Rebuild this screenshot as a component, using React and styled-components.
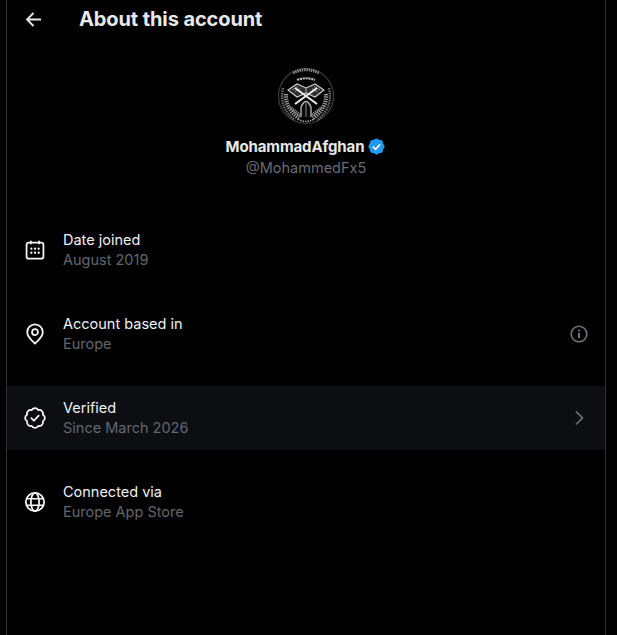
import React from "react";
import styled, { createGlobalStyle } from "styled-components";

const GlobalStyle = createGlobalStyle`
  html, body {
    margin: 0;
    height: 100%;
    background: #000;
  }
  body {
    font-family: Inter, "Liberation Sans", sans-serif;
    overflow: hidden;
  }
`;

const Panel = styled.main`
  box-sizing: border-box;
  width: 600px;
  height: 635px;
  margin-left: 6px;
  border-left: 1px solid #2f3336;
  border-right: 1px solid #2f3336;
  color: #e7e9ea;
`;

const Header = styled.header`
  display: flex;
  align-items: center;
  height: 38px;
  padding-left: 18px;
  gap: 37px;
`;

const BackIcon = styled.svg`
  width: 17px;
  height: 17px;
  fill: none;
  stroke: #e7e9ea;
  stroke-width: 1.8;
`;

const Title = styled.h1`
  margin: 0;
  font-size: 20px;
  line-height: 24px;
  font-weight: 700;
  letter-spacing: -0.1px;
`;

const Profile = styled.section`
  display: flex;
  flex-direction: column;
  align-items: center;
  padding-top: 28px;
`;

const Avatar = styled.svg`
  width: 60px;
  height: 60px;
  display: block;
`;

const NameRow = styled.div`
  display: flex;
  align-items: center;
  gap: 3px;
  margin-top: 10px;
  height: 20px;
  font-size: 15px;
  font-weight: 700;
  letter-spacing: -0.1px;
`;

const Handle = styled.div`
  margin-top: 2px;
  font-size: 14.5px;
  line-height: 20px;
  color: #676c71;
`;

const List = styled.ul`
  list-style: none;
  margin: 0;
  padding: 40px 0 0;
  display: flex;
  flex-direction: column;
  gap: 20px;
`;

const Row = styled.li`
  display: flex;
  align-items: center;
  height: 64px;
  padding: 0 17px;
  background: ${(p) => (p.$active ? "#0c0e11" : "transparent")};
`;

const RowIcon = styled.svg`
  width: 22px;
  height: 22px;
  flex: none;
  fill: none;
  stroke: #f7f8f8;
  stroke-width: 1.9;
  stroke-linecap: round;
  stroke-linejoin: round;
`;

const RowText = styled.div`
  flex: 1;
  margin-left: 17px;
  padding-bottom: 1px;
  font-size: 14.5px;
  line-height: 19px;
`;

const RowLabel = styled.div`
  color: #f1f2f3;
`;

const RowValue = styled.div`
  margin-top: 1px;
  color: #62676d;
`;

const TrailIcon = styled.svg`
  width: 18px;
  height: 18px;
  flex: none;
  fill: none;
  stroke: #71767b;
  stroke-width: 1.6;
`;

const Emblem = () => (
  <Avatar viewBox="0 0 60 60">
    <circle cx="30" cy="30" r="30" fill="#000" />
    <circle cx="30" cy="30" r="27.500" fill="none" stroke="#3d3d3d" strokeWidth="1.2" />
    <path d="M17 7 Q30 0.500 43 7" fill="none" stroke="#8a8a8a" strokeWidth="3" strokeDasharray="1.5 0.8" />
    <path d="M21 14 Q30 10.500 39 14" fill="none" stroke="#b8b8b8" strokeWidth="2.200" strokeDasharray="2.200 0.700" />
    <path d="M7 22 Q2.500 42 19 54" fill="none" stroke="#6c6c6c" strokeWidth="2.400" strokeDasharray="1.500 0.900" />
    <path d="M53 22 Q57.500 42 41 54" fill="none" stroke="#6c6c6c" strokeWidth="2.400" strokeDasharray="1.500 0.900" />
    <path d="M10 28 Q9 42 23 52" fill="none" stroke="#a2a2a2" strokeWidth="4.200" strokeDasharray="1.300 1" />
    <path d="M50 28 Q51 42 37 52" fill="none" stroke="#a2a2a2" strokeWidth="4.200" strokeDasharray="1.300 1" />
    <path d="M12 24 L21 18 L30 22 L39 18 L48 24 L39 31 L30 27 L21 31 Z" fill="#2c2c2c" stroke="#cfcfcf" strokeWidth="1.100" />
    <path d="M16 24 L22 20.500 M44 24 L38 20.500 M18.500 26 L24 22.500 M41.500 26 L36 22.500" stroke="#9a9a9a" strokeWidth="0.800" />
    <path d="M30 22 V27" stroke="#cfcfcf" strokeWidth="0.800" />
    <path d="M19 22 L41 38 M41 22 L19 38" stroke="#efefef" strokeWidth="2" />
    <path d="M25 51 V41 Q30 30 35 41 V51" fill="#0a0a0a" stroke="#bdbdbd" strokeWidth="1.300" />
    <path d="M30 37 V51" stroke="#7c7c7c" strokeWidth="1.100" />
    <path d="M15 42 L24 49 M45 42 L36 49" stroke="#8c8c8c" strokeWidth="3" strokeDasharray="1.200 0.800" />
    <path d="M22 53 Q30 58 38 53" fill="none" stroke="#a8a8a8" strokeWidth="1.600" strokeDasharray="1.500 1" />
  </Avatar>
);

const VerifiedBadge = () => (
  <svg width="19" height="19" viewBox="0 0 22 22">
    <path
      fill="#1d9bf0"
      d="M20.396 11c-.018-.646-.215-1.275-.57-1.816-.354-.54-.852-.972-1.438-1.246.223-.607.27-1.264.14-1.897-.131-.634-.437-1.218-.882-1.687-.47-.445-1.053-.75-1.687-.882-.633-.13-1.29-.083-1.897.14-.273-.587-.704-1.086-1.245-1.44S11.647 1.62 11 1.604c-.646.017-1.273.213-1.813.568s-.969.854-1.24 1.44c-.608-.223-1.267-.272-1.902-.14-.635.13-1.22.436-1.69.882-.445.47-.749 1.055-.878 1.688-.13.633-.08 1.29.144 1.896-.587.274-1.087.705-1.443 1.245-.356.54-.555 1.17-.574 1.817.02.647.218 1.276.574 1.817.356.54.856.972 1.443 1.245-.224.606-.274 1.263-.144 1.896.13.634.433 1.218.877 1.688.47.443 1.054.747 1.687.878.633.132 1.29.084 1.897-.136.274.586.705 1.084 1.246 1.439.54.354 1.17.551 1.816.569.647-.016 1.276-.213 1.817-.567s.972-.854 1.245-1.44c.604.239 1.266.296 1.903.164.636-.132 1.22-.447 1.68-.907.46-.46.776-1.044.908-1.681s.075-1.299-.165-1.903c.586-.274 1.084-.705 1.439-1.246.354-.54.551-1.17.569-1.816z"
    />
    <path fill="none" stroke="#fff" strokeWidth="1.9" d="M7 11.2l3 3 5.2-5.8" />
  </svg>
);

const rows = [
  {
    label: "Date joined",
    value: "August 2019",
    icon: (
      <>
        <rect x="2.800" y="4" width="18.400" height="17.500" rx="2.500" />
        <path d="M7.500 2.500V5M16.500 2.500V5" />
        <path d="M8 10.500h.01M12 10.500h.01M16 10.500h.01M8 15h.01M12 15h.01M16 15h.01" strokeWidth="2.500" />
      </>
    ),
  },
  {
    label: "Account based in",
    value: "Europe",
    icon: (
      <>
        <path d="M12 22.500C9 19.500 3.500 15 3.500 10a8.500 8.500 0 0 1 17 0c0 5-5.500 9.500-8.500 12.500z" />
        <circle cx="12" cy="10" r="3.200" />
      </>
    ),
    trail: "info",
  },
  {
    label: "Verified",
    value: "Since March 2026",
    icon: (
      <>
        <path d="M15.560 3.410A4 4 0 0 1 20.590 8.440A4 4 0 0 1 20.590 15.560A4 4 0 0 1 15.560 20.590A4 4 0 0 1 8.440 20.590A4 4 0 0 1 3.410 15.560A4 4 0 0 1 3.410 8.440A4 4 0 0 1 8.440 3.410A4 4 0 0 1 15.560 3.410z" />
        <path d="M8 12.200l2.800 2.800 5.200-5.500" />
      </>
    ),
    trail: "chevron",
    active: true,
  },
  {
    label: "Connected via",
    value: "Europe App Store",
    icon: (
      <>
        <circle cx="12" cy="12" r="10" />
        <path d="M3.500 8.500h17M3.500 15.500h17" strokeWidth="1.700" />
        <ellipse cx="12" cy="12" rx="4.500" ry="10" />
      </>
    ),
  },
];

const App = () => {
  return (
    <>
      <GlobalStyle />
      <Panel>
        <Header>
          <BackIcon viewBox="0 0 17 17">
            <path d="M16 8.500H2M8.500 2L2 8.500 8.500 15" />
          </BackIcon>
          <Title>About this account</Title>
        </Header>
        <Profile>
          <Emblem />
          <NameRow>
            MohammadAfghan
            <VerifiedBadge />
          </NameRow>
          <Handle>@MohammedFx5</Handle>
        </Profile>
        <List>
          {rows.map((row) => (
            <Row key={row.label} $active={row.active}>
              <RowIcon viewBox="0 0 24 24">{row.icon}</RowIcon>
              <RowText>
                <RowLabel>{row.label}</RowLabel>
                <RowValue>{row.value}</RowValue>
              </RowText>
              {row.trail === "info" && (
                <TrailIcon viewBox="0 0 18 18">
                  <circle cx="9" cy="9" r="7.800" />
                  <path d="M9 8v5M9 4.800v1.800" strokeWidth="2" />
                </TrailIcon>
              )}
              {row.trail === "chevron" && (
                <TrailIcon viewBox="0 0 18 18">
                  <path d="M6 2.500L12.500 9 6 15.500" />
                </TrailIcon>
              )}
            </Row>
          ))}
        </List>
      </Panel>
    </>
  );
};

export default App;
